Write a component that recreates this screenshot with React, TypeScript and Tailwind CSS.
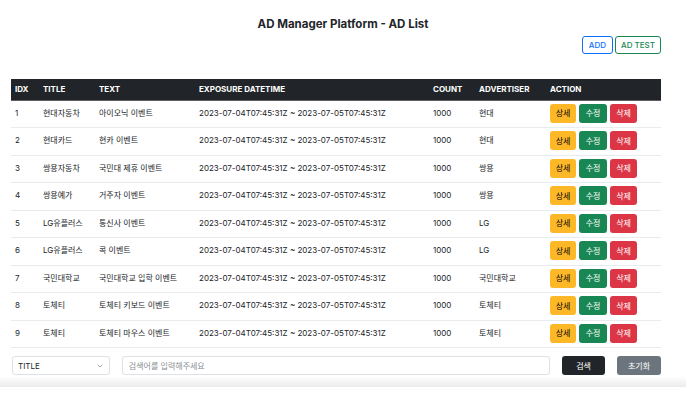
import { ChevronDown } from 'lucide-react';

type Ad = {
    idx: number;
    title: string;
    text: string;
    advertiser: string;
};

const ads: Ad[] = [
    { idx: 1, title: '현대자동차', text: '아이오닉 이벤트', advertiser: '현대' },
    { idx: 2, title: '현대카드', text: '현카 이벤트', advertiser: '현대' },
    { idx: 3, title: '쌍용자동차', text: '국민대 제휴 이벤트', advertiser: '쌍용' },
    { idx: 4, title: '쌍용예가', text: '거주자 이벤트', advertiser: '쌍용' },
    { idx: 5, title: 'LG유플러스', text: '통신사 이벤트', advertiser: 'LG' },
    { idx: 6, title: 'LG유플러스', text: '콕 이벤트', advertiser: 'LG' },
    { idx: 7, title: '국민대학교', text: '국민대학교 입학 이벤트', advertiser: '국민대학교' },
    { idx: 8, title: '토체티', text: '토체티 키보드 이벤트', advertiser: '토체티' },
    { idx: 9, title: '토체티', text: '토체티 마우스 이벤트', advertiser: '토체티' },
];

const font = { fontFamily: 'Inter, "Noto Sans CJK KR", sans-serif' };

export default function App() {
    return (
        <div className="w-[686px] h-[396px] bg-white text-[#212529] overflow-hidden flex flex-col" style={font}>
            <div className="px-[11px] flex-1">
                <h1 className="pt-[16px] text-center text-[11.5px] leading-[16px] font-bold">AD Manager Platform - AD List</h1>

                <div className="mt-[4px] flex justify-end gap-[2px] pr-[14px]">
                    <button className="h-[18px] px-[6px] rounded-[3px] border border-[#0d6efd] text-[#0d6efd] text-[8px] font-medium">ADD</button>
                    <button className="h-[18px] px-[5px] rounded-[3px] border border-[#198754] text-[#198754] text-[8px] font-medium">AD TEST</button>
                </div>

                <table className="mt-[25px] w-[650px] table-fixed border-collapse text-[8px]">
                    <colgroup>
                        <col className="w-[28px]" />
                        <col className="w-[56px]" />
                        <col className="w-[100px]" />
                        <col className="w-[234px]" />
                        <col className="w-[46px]" />
                        <col className="w-[71px]" />
                        <col className="w-[115px]" />
                    </colgroup>
                    <thead>
                        <tr className="bg-[#212529] text-white h-[21px] border-b border-[#5a5e62]">
                            {['IDX', 'TITLE', 'TEXT', 'EXPOSURE DATETIME', 'COUNT', 'ADVERTISER', 'ACTION'].map((h) => (
                                <th key={h} className="px-[4px] text-left font-bold">{h}</th>
                            ))}
                        </tr>
                    </thead>
                    <tbody>
                        {ads.map((ad) => (
                            <tr key={ad.idx} className="h-[27.5px] border-b border-[#e9ecef]">
                                <td className="px-[4px] align-top pt-[6px]">{ad.idx}</td>
                                <td className="px-[4px] align-top pt-[6px]">{ad.title}</td>
                                <td className="px-[4px] align-top pt-[6px]">{ad.text}</td>
                                <td className="px-[4px] align-top pt-[6px]">2023-07-04T07:45:31Z ~ 2023-07-05T07:45:31Z</td>
                                <td className="px-[4px] align-top pt-[6px]">1000</td>
                                <td className="px-[4px] align-top pt-[6px]">{ad.advertiser}</td>
                                <td className="px-[4px] align-top pt-[3px]">
                                    <div className="flex gap-[3px]">
                                        <button className="h-[19px] w-[26px] rounded-[3px] bg-[#fdb827] text-black text-[8px]">상세</button>
                                        <button className="h-[19px] w-[28px] rounded-[3px] bg-[#198754] text-white text-[8px]">수정</button>
                                        <button className="h-[19px] w-[27px] rounded-[3px] bg-[#dc3545] text-white text-[8px]">삭제</button>
                                    </div>
                                </td>
                            </tr>
                        ))}
                    </tbody>
                </table>

                <div className="mt-[8px] flex items-center w-[650px]">
                    <div className="w-[98px] h-[19px] ml-[1px] rounded-[3px] border border-[#dee2e6] flex items-center justify-between px-[5px] text-[8px]">
                        <span>TITLE</span>
                        <ChevronDown className="w-[8px] h-[8px] text-[#6c757d]" strokeWidth={2} />
                    </div>
                    <div className="ml-[12px] w-[429px] h-[19px] rounded-[3px] border border-[#dee2e6] flex items-center px-[6px] text-[8px] text-[#8a8f94]">
                        검색어를 입력해주세요
                    </div>
                    <button className="ml-[12px] w-[43px] h-[19px] rounded-[3px] bg-[#212529] text-white text-[8px]">검색</button>
                    <button className="ml-[12px] w-[44px] h-[19px] rounded-[3px] bg-[#6c757d] text-white text-[8px]">초기화</button>
                </div>
            </div>
            <div className="h-[11px] bg-gradient-to-b from-white to-[#ebebeb] shrink-0" />
            <div className="h-[9px] bg-white shrink-0" />
        </div>
    );
}
